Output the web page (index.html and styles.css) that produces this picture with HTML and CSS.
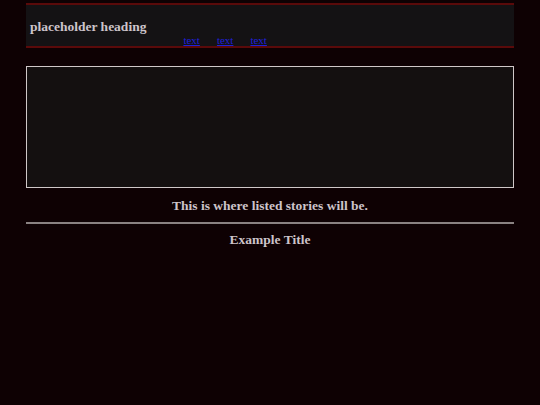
FILE: index.html
```html
<!DOCTYPE html>
<html>
<head>
<meta charset="utf-8">
<link rel="stylesheet" href="styles.css">
</head>
<body>
<div class="page">
  <header class="site-header">
    <h1 class="site-title">placeholder heading</h1>
    <nav class="nav">
      <a href="#">text</a>
      <a href="#">text</a>
      <a href="#">text</a>
    </nav>
  </header>
  <div class="feature"></div>
  <p class="notice">This is where listed stories will be.</p>
  <hr class="rule">
  <h2 class="story-title">Example Title</h2>
</div>
</body>
</html>
```
FILE: styles.css
```css
html, body {
  margin: 0;
  padding: 0;
  background: #0e0103;
  font-family: "Liberation Serif", "Times New Roman", serif;
  color: #cdc4ca;
}
.page {
  margin: 0 26px;
  padding-top: 3px;
}
.site-header {
  display: flex;
  align-items: flex-end;
  height: 41px;
  background: #141214;
  border-top: 2px solid #5a0a0a;
  border-bottom: 2px solid #5a0a0a;
  padding: 0 4px;
}
.site-title {
  margin: 0 0 11px 0;
  font-size: 13.5px;
  line-height: 16px;
  font-weight: bold;
}
.nav {
  display: flex;
  gap: 17px;
  margin-left: 37px;
  margin-bottom: 0;
}
.nav a {
  color: #2020d8;
  font-size: 11px;
  line-height: 11px;
}
.feature {
  margin-top: 18px;
  height: 120px;
  background: #141010;
  border: 1px solid #cfc8c8;
}
.notice {
  margin: 10px 0 0 0;
  text-align: center;
  font-size: 13.5px;
  font-weight: bold;
  line-height: 16px;
}
.rule {
  margin: 8px 0 0 0;
  border: 0;
  height: 2px;
  background: #8a8282;
}
.story-title {
  margin: 8px 0 0 0;
  text-align: center;
  font-size: 13.5px;
  font-weight: bold;
  line-height: 16px;
}
```
